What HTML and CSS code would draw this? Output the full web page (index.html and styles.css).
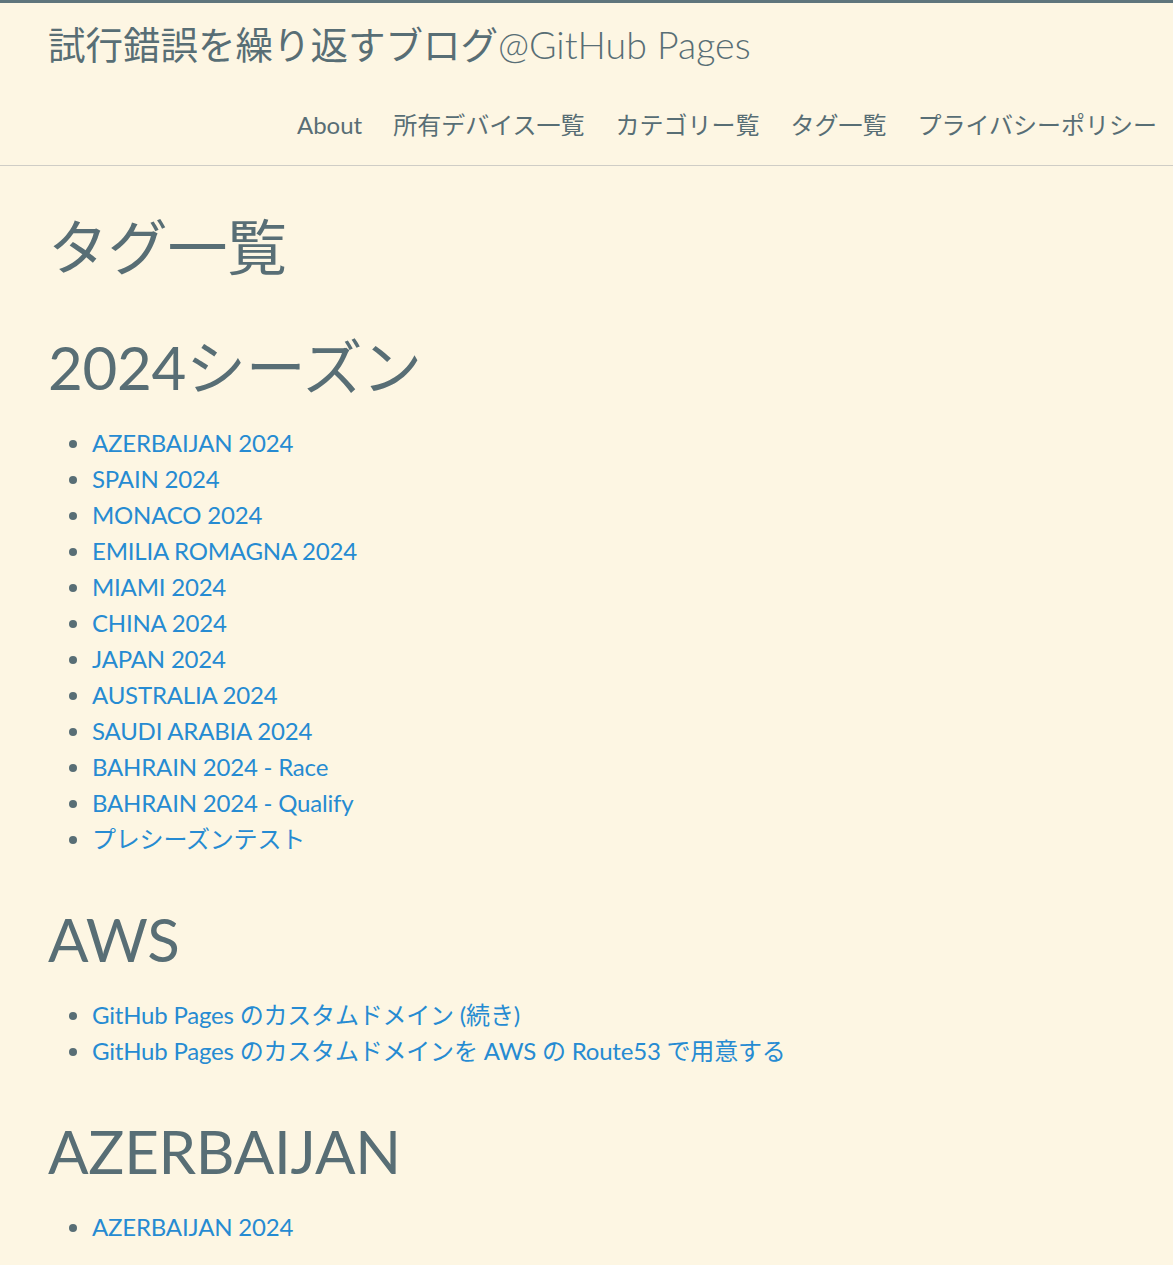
FILE: index.html
```html
<!DOCTYPE html>
<html lang="ja">
<head>
<meta charset="utf-8">
<title>タグ一覧 | 試行錯誤を繰り返すブログ@GitHub Pages</title>
<link rel="stylesheet" href="styles.css">
</head>
<body>
<header class="site-header">
  <a class="site-title" href="#">試行錯誤を繰り返すブログ<span class="site-title-sub">@GitHub Pages</span></a>
  <nav class="site-nav">
    <a href="#">About</a>
    <a href="#">所有デバイス一覧</a>
    <a href="#">カテゴリー覧</a>
    <a href="#">タグ一覧</a>
    <a href="#">プライバシーポリシー</a>
  </nav>
</header>
<main class="page">
  <h1 class="page-title">タグ一覧</h1>

  <h2 class="tag-title">2024シーズン</h2>
  <ul class="post-list">
    <li><a href="#">AZERBAIJAN 2024</a></li>
    <li><a href="#">SPAIN 2024</a></li>
    <li><a href="#">MONACO 2024</a></li>
    <li><a href="#">EMILIA ROMAGNA 2024</a></li>
    <li><a href="#">MIAMI 2024</a></li>
    <li><a href="#">CHINA 2024</a></li>
    <li><a href="#">JAPAN 2024</a></li>
    <li><a href="#">AUSTRALIA 2024</a></li>
    <li><a href="#">SAUDI ARABIA 2024</a></li>
    <li><a href="#">BAHRAIN 2024 - Race</a></li>
    <li><a href="#">BAHRAIN 2024 - Qualify</a></li>
    <li><a href="#">プレシーズンテスト</a></li>
  </ul>

  <h2 class="tag-title">AWS</h2>
  <ul class="post-list">
    <li><a href="#">GitHub Pages のカスタムドメイン (続き)</a></li>
    <li><a href="#">GitHub Pages のカスタムドメインを AWS の Route53 で用意する</a></li>
  </ul>

  <h2 class="tag-title">AZERBAIJAN</h2>
  <ul class="post-list">
    <li><a href="#">AZERBAIJAN 2024</a></li>
  </ul>
</main>
</body>
</html>
```

FILE: styles.css
```css
html, body {
  margin: 0;
  padding: 0;
}

body {
  background: #fdf6e3;
  color: #586e75;
  font-family: "Lato", "Noto Sans CJK JP", sans-serif;
  font-size: 24px;
  line-height: 1.5;
}

a {
  text-decoration: none;
}

.site-header {
  border-top: 3px solid #5f757c;
  border-bottom: 1px solid #cfcdc6;
  padding: 20px 16px 22px 48px;
  display: flex;
  flex-direction: column;
}

.site-title {
  color: #586e75;
  font-size: 37.5px;
  line-height: 44px;
  align-self: flex-start;
}

.site-title-sub {
  font-weight: 300;
}

.site-nav {
  margin-top: 40px;
  display: flex;
  justify-content: flex-end;
  gap: 31px;
  line-height: 36px;
}

.site-nav a {
  color: #586e75;
}

.page {
  padding: 45px 48px 40px 48px;
}

.page-title,
.tag-title {
  font-weight: 400;
  font-size: 60px;
  line-height: 72px;
  margin: 0;
  color: #586e75;
  letter-spacing: -0.3px;
}

.page-title {
  margin-bottom: 48px;
}

.tag-title {
  margin-bottom: 22px;
}

.post-list {
  margin: 0 0 46px 0;
  padding-left: 44px;
}

.post-list li {
  line-height: 36px;
}

.post-list a {
  color: #268bd2;
  letter-spacing: -0.2px;
}
```
